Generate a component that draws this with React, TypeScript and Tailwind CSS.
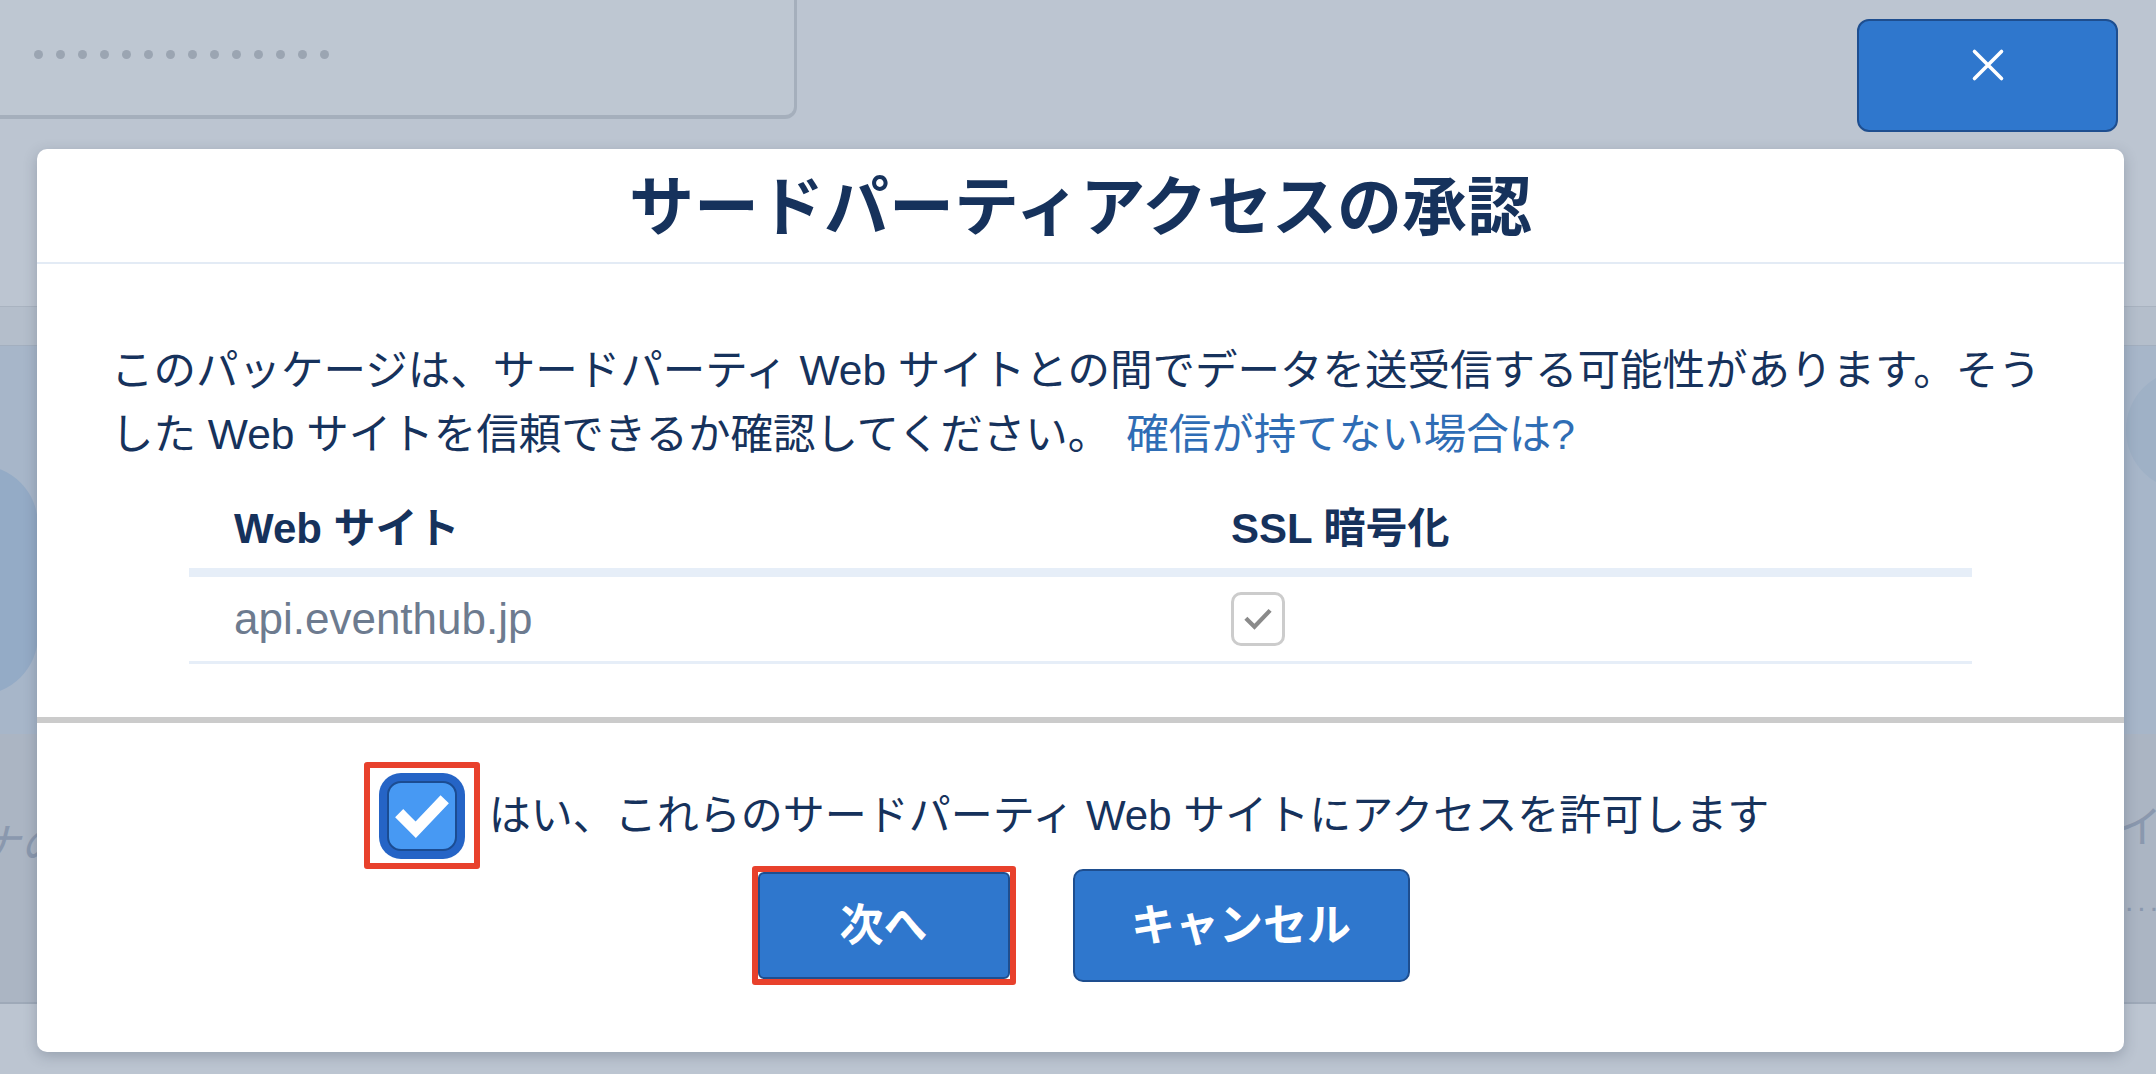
import React from "react";

const font = "font-['Liberation_Sans','Noto_Sans_CJK_JP',sans-serif]";

const CheckMark: React.FC<{ className?: string; stroke: string; width: number }> = ({
  className,
  stroke,
  width,
}) => (
  <svg viewBox="0 0 24 24" className={className} fill="none">
    <path d="M4.5 12.5l5 5L19.5 7" stroke={stroke} strokeWidth={width} strokeLinecap="square" />
  </svg>
);

const BackgroundPage: React.FC = () => (
  <div className="flex flex-col w-full h-full">
    {/* card peeking out at the top left */}
    <div className="w-[797px] h-[119px] bg-[#bec7d2] border-b-[4px] border-r-[3px] border-[#a5afbc] rounded-br-[12px] flex items-center gap-[13px] pl-[34px] pb-[6px]">
      {Array.from({ length: 14 }).map((_, i) => (
        <span key={i} className="w-[9px] h-[9px] rounded-full bg-[#9ba5b2]" />
      ))}
    </div>
    <div className="h-[187px]" />
    <div className="h-[40px] bg-[#b4becb] border-t border-[#a9b3c0] border-b border-b-[#a3afbf]" />
    <div className="h-[388px] bg-[#a7b6c9] flex items-center justify-between">
      <div className="w-[120px] h-[230px] rounded-full bg-[#94abc6] -ml-[82px] mt-[80px]" />
      <div className="w-[120px] h-[120px] rounded-full bg-[#9fb1c6] -mr-[90px] mb-[220px]" />
    </div>
    <div className="h-[270px] bg-[#abb5c3] border-b-2 border-[#9ea9b8] flex items-start justify-between text-[#8a98ae] text-[44px]">
      <span className="italic -ml-[24px] mt-[78px]">ナの</span>
      <div className="flex flex-col items-end -mr-[6px] mt-[72px] leading-none">
        <span>イ</span>
        <span className="text-[30px] tracking-[4px] mt-[36px]">...</span>
      </div>
    </div>
  </div>
);

export default function App() {
  return (
    <div className={`relative w-[2156px] h-[1074px] overflow-hidden bg-[#bcc5d1] ${font}`}>
      <BackgroundPage />

      <div className="absolute inset-0 flex flex-col px-[32px] pt-[19px]">
        <button className="self-end mr-[6px] w-[261px] h-[113px] bg-[#2f77cd] border-2 border-[#1e4e8f] rounded-[12px] flex justify-center pt-[26px]">
          <svg viewBox="0 0 24 24" className="w-[36px] h-[36px]" fill="none">
            <path d="M3 3l18 18M21 3L3 21" stroke="white" strokeWidth={2.4} strokeLinecap="round" />
          </svg>
        </button>

        <div className="mt-[17px] ml-[5px] w-[2087px] h-[903px] bg-white rounded-[10px] shadow-[0_4px_14px_rgba(40,50,70,0.25)] flex flex-col text-[#16325c]">
          {/* header */}
          <div className="h-[115px] border-b-2 border-[#e3ebf5] flex items-center justify-center">
            <h1 className="text-[65px] font-bold leading-none pt-[4px]">サードパーティアクセスの承認</h1>
          </div>

          {/* body */}
          <div className="px-[74px] pt-[75px] pb-[53px]">
            <p className="text-[42.5px] leading-[64px] whitespace-nowrap">
              このパッケージは、サードパーティ Web サイトとの間でデータを送受信する可能性があります。そう
              <br />
              した Web サイトを信頼できるか確認してください。
              <a className="ml-[16px] text-[#2f6db5]">確信が持てない場合は?</a>
            </p>

            <div className="mx-[78px] mt-[22px]">
              <div className="h-[88px] flex items-center border-b-[9px] border-[#e6eef8] text-[42px] font-bold">
                <div className="w-[1042px] pl-[45px]">Web サイト</div>
                <div className="flex-1">SSL 暗号化</div>
              </div>
              <div className="h-[87px] flex items-center border-b-[3px] border-[#e6eef8]">
                <div className="w-[1042px] pl-[45px] text-[44px] text-[#6d7b8f]">api.eventhub.jp</div>
                <div className="flex-1">
                  <div className="w-[54px] h-[54px] rounded-[10px] border-[3px] border-[#cccccc] bg-white flex items-center justify-center">
                    <CheckMark className="w-[34px] h-[34px]" stroke="#8a8a8a" width={3} />
                  </div>
                </div>
              </div>
            </div>
          </div>

          {/* footer */}
          <div className="border-t-[6px] border-[#cbcbcb] flex-1 flex flex-col items-center pt-[39px]">
            <div className="flex items-center -ml-[28px]">
              <div className="w-[116px] h-[107px] border-[6px] border-[#e8412c] rounded-[3px] flex items-center justify-center">
                <div className="w-[86px] h-[86px] rounded-[22px] bg-[#2564c6] p-[8px]">
                  <div className="w-full h-full rounded-[14px] border-2 border-[#1b4c92] bg-[#4799f3] flex items-center justify-center">
                    <CheckMark className="w-[60px] h-[60px]" stroke="white" width={4.6} />
                  </div>
                </div>
              </div>
              <span className="ml-[9px] text-[42px]">はい、これらのサードパーティ Web サイトにアクセスを許可します</span>
            </div>

            <div className="flex items-center gap-[57px] -mt-[3px]">
              <div className="w-[264px] h-[119px] border-[6px] border-[#e8412c] rounded-[3px]">
                <button className="w-full h-full bg-[#2f77cd] border-2 border-[#1e4e8f] rounded-[6px] text-white text-[44px] font-bold">
                  次へ
                </button>
              </div>
              <button className="w-[337px] h-[113px] bg-[#2f77cd] border-2 border-[#1e4e8f] rounded-[10px] text-white text-[44px] font-bold">
                キャンセル
              </button>
            </div>
          </div>
        </div>
      </div>
    </div>
  );
}
